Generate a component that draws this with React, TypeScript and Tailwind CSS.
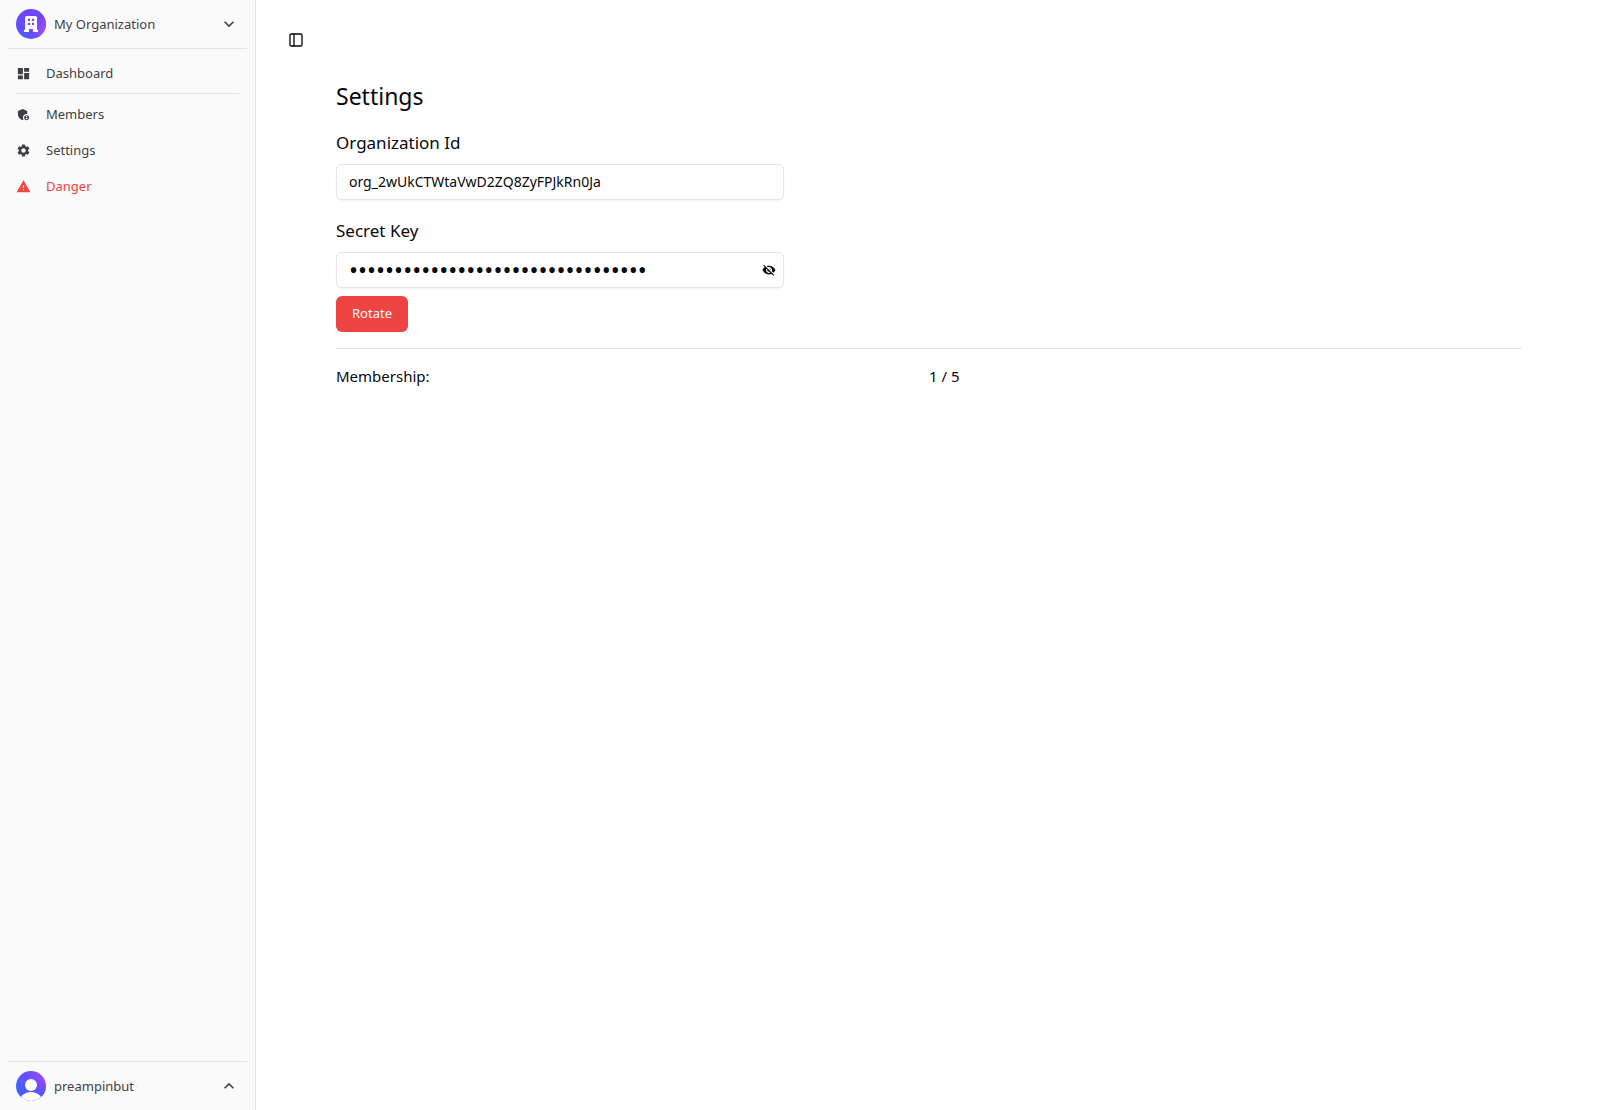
import React, { useState } from "react";
import {
  MdAdminPanelSettings,
  MdDashboard,
  MdKeyboardArrowDown,
  MdKeyboardArrowUp,
  MdSettings,
  MdVisibility,
  MdVisibilityOff,
  MdWarning,
} from "react-icons/md";
import { PanelLeft } from "lucide-react";

interface NavItemProps {
  icon: React.ReactNode;
  label: string;
  danger?: boolean;
}

const NavItem: React.FC<NavItemProps> = ({ icon, label, danger }) => (
  <a
    href="#"
    className={`flex h-9 items-center gap-[15px] px-2 text-[13px] leading-5 ${
      danger ? "text-[#ef4444]" : "text-zinc-700"
    }`}
  >
    {icon}
    {label}
  </a>
);

const OrgAvatar = () => (
  <svg width="30" height="30" viewBox="0 0 30 30" aria-hidden="true">
    <defs>
      <linearGradient id="org-base" x1="0" y1="1" x2="0.6" y2="0">
        <stop offset="0" stopColor="#4a5cff" />
        <stop offset="0.6" stopColor="#6c47ff" />
        <stop offset="1" stopColor="#6c47ff" />
      </linearGradient>
      <radialGradient id="org-glow" cx="0.95" cy="0.7" r="0.5">
        <stop offset="0" stopColor="#a04cff" />
        <stop offset="1" stopColor="#a04cff" stopOpacity="0" />
      </radialGradient>
    </defs>
    <circle cx="15" cy="15" r="15" fill="url(#org-base)" />
    <circle cx="15" cy="15" r="15" fill="url(#org-glow)" />
    <path
      fill="#fff"
      fillRule="evenodd"
      d="M10.600 7h8.800a1.600 1.600 0 0 1 1.600 1.600V20.800h.2a.9.9 0 0 1 .9.9v1.300h-5.100v-2.500a.6.600 0 0 0-.6-.6h-2.800a.6.600 0 0 0-.6.600V23H7.900v-1.300a.9.9 0 0 1 .9-.9H9V8.600A1.600 1.600 0 0 1 10.600 7zM11.900 9.700v2.300h2.200V9.700zm4 0v2.300h2.200V9.700zM11.900 13.700V16h2.200v-2.300zm4 0V16h2.200v-2.300z"
    />
  </svg>
);

const UserAvatar = () => (
  <svg width="30" height="30" viewBox="0 0 30 30" aria-hidden="true">
    <defs>
      <linearGradient id="user-base" x1="0" y1="0.7" x2="0.9" y2="0.1">
        <stop offset="0" stopColor="#4262ff" />
        <stop offset="0.55" stopColor="#6550ff" />
        <stop offset="1" stopColor="#9a48ff" />
      </linearGradient>
      <radialGradient id="user-shade" cx="0.9" cy="1" r="0.6">
        <stop offset="0" stopColor="#4c58ff" />
        <stop offset="1" stopColor="#4c58ff" stopOpacity="0" />
      </radialGradient>
      <clipPath id="user-clip">
        <circle cx="15" cy="15" r="15" />
      </clipPath>
    </defs>
    <g clipPath="url(#user-clip)">
      <rect width="30" height="30" fill="url(#user-base)" />
      <rect width="30" height="30" fill="url(#user-shade)" />
      <circle cx="15" cy="14" r="6" fill="#fff" />
      <circle cx="15" cy="34" r="13" fill="#fff" />
    </g>
  </svg>
);

const Sidebar = () => (
  <aside className="flex w-64 shrink-0 flex-col border-r border-zinc-200 bg-[#fafafa] px-2 text-[13px] leading-5 text-zinc-700">
    <button className="flex h-12 w-full cursor-pointer items-center gap-2 px-2">
      <OrgAvatar />
      <span>My Organization</span>
      <MdKeyboardArrowDown size={20} className="ml-auto" />
    </button>
    <nav className="flex-1 border-t border-zinc-200 pt-1.5">
      <NavItem icon={<MdDashboard size={15} />} label="Dashboard" />
      <hr className="mx-2 my-0.5 border-zinc-200" />
      <NavItem icon={<MdAdminPanelSettings size={15} />} label="Members" />
      <NavItem icon={<MdSettings size={15} />} label="Settings" />
      <NavItem icon={<MdWarning size={15} />} label="Danger" danger />
    </nav>
    <button className="flex h-[49px] w-full cursor-pointer items-center gap-2 border-t border-zinc-200 px-2">
      <UserAvatar />
      <span>preampinbut</span>
      <MdKeyboardArrowUp size={20} className="ml-auto" />
    </button>
  </aside>
);

const App: React.FC = () => {
  const [showKey, setShowKey] = useState(false);

  return (
    <div className="flex min-h-screen bg-white font-['Noto_Sans',sans-serif] text-zinc-950">
      <Sidebar />
      <main className="flex-1 px-8 pt-[26px]">
        <button
          aria-label="Toggle sidebar"
          className="flex size-7 cursor-pointer items-center"
        >
          <PanelLeft size={16} />
        </button>

        <div className="flex flex-col px-12 pt-[26px]">
          <h1 className="text-[23px] leading-8">Settings</h1>

          <label htmlFor="org-id" className="mt-4 text-[17px] leading-[30px]">
            Organization Id
          </label>
          <input
            id="org-id"
            type="text"
            readOnly
            value="org_2wUkCTWtaVwD2ZQ8ZyFPJkRn0Ja"
            className="mt-1.5 h-9 w-full max-w-md rounded-md border border-zinc-200 px-3 pb-0.5 text-[14px] shadow-xs"
          />

          <label htmlFor="secret-key" className="mt-4 text-[17px] leading-[30px]">
            Secret Key
          </label>
          <div className="relative mt-1.5 w-full max-w-md">
            <input
              id="secret-key"
              type={showKey ? "text" : "password"}
              readOnly
              value="sk_0000000000000000000000000000ab"
              className={`h-9 w-full rounded-md border border-zinc-200 pr-9 pl-3 shadow-xs ${
                showKey ? "text-[14px]" : "text-[24px]"
              }`}
            />
            <button
              aria-label="Toggle secret key"
              className="absolute inset-y-0 right-2 cursor-pointer"
              onClick={() => setShowKey(!showKey)}
            >
              {showKey ? <MdVisibility size={14} /> : <MdVisibilityOff size={14} />}
            </button>
          </div>
          <button className="mt-2 h-9 cursor-pointer self-start rounded-md bg-[#ef4444] px-4 text-[13px] text-zinc-50">
            Rotate
          </button>

          <hr className="my-4 border-zinc-200" />

          <div className="grid grid-cols-2 text-[15px] leading-[22px]">
            <span>Membership:</span>
            <span>1 / 5</span>
          </div>
        </div>
      </main>
    </div>
  );
};

export default App;
